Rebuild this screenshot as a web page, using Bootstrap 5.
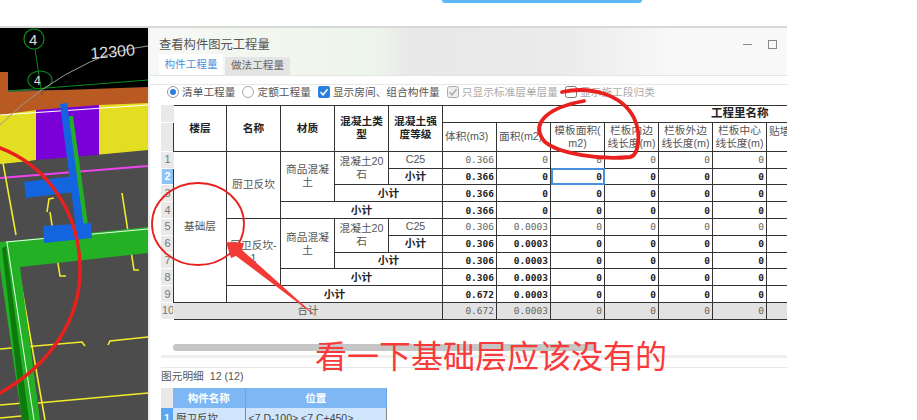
<!DOCTYPE html>
<html lang="zh">
<head>
  <meta charset="UTF-8" />
  <meta name="viewport" content="width=device-width, initial-scale=1.0" />
  <title>查看构件图元工程量</title>
  <link href="https://cdn.jsdelivr.net/npm/bootstrap@5.3.0/dist/css/bootstrap.min.css" rel="stylesheet" />
  <style>
    html, body { height: 420px; overflow: hidden; background: #fff; }
    body { font-family: "Liberation Sans", "Noto Sans CJK SC", sans-serif; color: #555; position: relative; }

    .top-strip { height: 28px; position: relative; border-bottom: 2px solid #d8d8d8; width: 787px; }
    .top-pill { position: absolute; left: 442px; top: 0; width: 200px; height: 3px; background: #5cb8f8; border-radius: 0 0 4px 4px; }
    .main-area { display: flex; width: 787px; height: 392px; }
    .cad-view { width: 148px; height: 392px; flex: none; background: #4c4c4c; }
    .cad-view svg { display: block; }

    .win { flex: 1; min-width: 0; background: #fff; overflow: hidden; border-left: 2px solid #eef0ee; }
    .win-head { height: 48px; background: linear-gradient(90deg, #f6f8f5, #eef5ea 35%, #e8e8e8 41%, #ebebeb 65%, #f8f8f8 82%); border-bottom: 1px solid #e4e4e4; position: relative; }
    .win-title { height: 26px; padding: 8px 0 0 9px; font-size: 12.3px; line-height: 18px; color: #555; }
    .win-btns { position: absolute; right: 10px; top: 12px; display: flex; gap: 16px; align-items: center; }
    .win-min { width: 9px; height: 1px; background: #888; }
    .win-max { width: 9px; height: 9px; border: 1px solid #888; }
    .win-tabs { height: 21px; padding-left: 9px; display: flex; gap: 2px; align-items: flex-end; }
    .win-tab { font-size: 10.6px; line-height: 16px; height: 18px; width: 65px; text-align: center; color: #666; background: #e4e4e4; }
    .win-tab-on { color: #4a90dc; background: #fff; height: 21px; width: 64px; line-height: 21px; }
    .opt-bar { height: 21px; margin: 8px 0 0 0; padding: 0 0 6px 17px; display: flex; align-items: center; gap: 7px; font-size: 10.7px; color: #555; border-top: 1px solid #e8e8e8; }
    .opt-item { display: flex; align-items: center; gap: 3px; white-space: nowrap; }
    .opt-off { color: #aaa; }
    .radio-on { width: 12px; height: 12px; border: 1px solid #999; border-radius: 50%; display: block; position: relative; }
    .radio-on::after { content: ""; position: absolute; left: 2px; top: 2px; width: 6px; height: 6px; border-radius: 50%; background: #2b7fe0; }
    .radio-off { width: 12px; height: 12px; border: 1px solid #aaa; border-radius: 50%; display: block; }
    .tick-box { display: block; flex: none; }

    .grid-wrap { height: 216px; margin-left: 11px; overflow: hidden; }
    .qty-grid { border-collapse: collapse; table-layout: fixed; width: 659px; font-size: 10.7px; color: #555; }
    .qty-grid col { width: 54px; }
    .qty-grid col.col-num { width: 12px; }
    .qty-grid col.col-floor { width: 53px; }
    .qty-grid td, .qty-grid th { border: 1px solid #333; padding: 0 2px; height: 16.8px; line-height: 13px; text-align: center; overflow: hidden; font-weight: normal; }
    .qty-grid th { background: #fff; font-weight: bold; color: #222; }
    .qty-grid th.group-head { height: 15px; text-align: left; padding-left: 268px; font-size: 11.5px; }
    .qty-grid tr.head-low { height: 29px; }
    .qty-grid th.thin { font-weight: normal; color: #555; }
    .qty-grid th.clip { white-space: nowrap; text-align: left; }
    .qty-grid th.clip-top { vertical-align: top; padding-top: 2px; }
    .qty-grid .rownum { width: 12px; background: #e9e9e9; border: 1px solid #e9e9e9; border-bottom-color: #fff; color: #777; padding: 0; font-size: 11px; }
    .qty-grid .rownum-on { background: #8cc4f8; color: #fff; font-weight: bold; }
    .qty-grid .num { text-align: right; font-family: "DejaVu Sans Mono", "Liberation Mono", monospace; font-size: 9.5px; color: #666; }
    .qty-grid .sum { font-weight: bold; color: #222; }
    .qty-grid .pick { outline: 2px solid #4a90dc; outline-offset: -2px; }
    .qty-grid tr.total td { background: #e2e2e2; }
    .qty-grid tr.total td.rownum { background: #e9e9e9; }

    .scroll-row { height: 37px; margin-left: 11px; padding-top: 23px; border-bottom: 3px solid #eee; }
    .scroll-thumb { height: 7px; width: 422px; background: #c6c6c6; border-radius: 3px; margin-left: 12px; }
    .detail-title { font-size: 10.7px; height: 21px; margin: 9px 0 0 11px; line-height: 14px; color: #555; border-top: 1px solid #e8e8e8; padding-top: 1px; }
    .detail-grid { margin-left: 11px; border-collapse: collapse; table-layout: fixed; width: 226px; font-size: 10.5px; }
    .detail-grid col.side-col { width: 12px; }
    .detail-grid col.name-col { width: 72px; }
    .detail-grid td, .detail-grid th { height: 20px; padding: 0 3px; line-height: 14px; white-space: nowrap; overflow: hidden; }
    .detail-grid th { background: #7db8f4; color: #fff; text-align: center; font-weight: bold; border-right: 1px solid #6aa6e4; }
    .detail-grid th.side { background: #e9e9e9; border-right: 0; }
    .detail-grid td { background: #cfe5fb; color: #444; border-right: 1px solid #888; }
    .detail-grid td.side { padding: 0; text-align: center; background: #5aa6f2; color: #fff; font-weight: bold; border-right: 0; }

    .note-layer { position: absolute; left: 0; top: 0; pointer-events: none; }
    .note-text { position: absolute; left: 315px; top: 333px; font-size: 32px; line-height: 42px; color: #f93a3a; white-space: nowrap; font-family: "Noto Sans CJK SC", sans-serif; }
    .cad-num { font-family: "Liberation Sans", sans-serif; fill: #ddd; }
  </style>
</head>

<body>
  <div class="top-strip"><div class="top-pill"></div></div>

  <div class="main-area">
    <div class="cad-view">
      <svg width="148" height="392" viewBox="0 28 148 392">
        <rect x="0" y="28" width="148" height="62" fill="#000" />
        <polygon points="0,96 8,92 148,87 148,106 0,116" fill="#b85a22" />
        <rect x="0" y="72" width="8" height="42" fill="#b85a22" />
        <polygon points="0,115 36,110 36,160 0,165" fill="#e4de22" />
        <polygon points="36,110 99,105 99,155 36,160" fill="#7a00d8" />
        <polygon points="99,105 148,103 148,151 99,155" fill="#e4de22" />
        <line x1="0" y1="115" x2="148" y2="105" stroke="#fff" stroke-width="1.2" />
        <polygon points="0,164 148,150 148,420 0,420" fill="#4c4c4c" />
        <line x1="0" y1="178" x2="148" y2="166" stroke="#ee44ee" stroke-width="2" />
        <!-- axis -->
        <circle cx="34" cy="39" r="10" fill="none" stroke="#0a8a1a" stroke-width="1.2" />
        <ellipse cx="40" cy="80" rx="12" ry="9" fill="none" stroke="#0a8a1a" stroke-width="1.2" />
        <line x1="35" y1="49" x2="42" y2="95" stroke="#0a8a1a" />
        <line x1="8" y1="91" x2="148" y2="80" stroke="#0a8a1a" />
        <path d="M0 125 Q40 85 90 62 Q115 50 148 46" fill="none" stroke="#999" stroke-width="1" />
        <text class="cad-num" x="29" y="45" font-size="15">4</text>
        <text class="cad-num" x="34" y="85" font-size="12">4</text>
        <text class="cad-num" x="91" y="59" font-size="16" transform="rotate(-5 91 59)">12300</text>
        <!-- yellow rebars -->
        <path d="M3 163 L16 235M50 212 L60 276 L66 276M122 193 L134 270 L139 270M18 267 L45 420M0 349 L82 342 L85 346M108 345 L110 341 L148 337M38 403 L148 393M0 405 L24 403M0 418 L32 415" fill="none" stroke="#f0ec28" stroke-width="1.6" />
        <path d="M47 212 L49 199 L54 198" fill="none" stroke="#f0ec28" stroke-width="1.6" />
        <!-- green beams -->
        <polygon points="0,242 148,227 148,253 20,267 40,420 22,420 0,268" fill="#24b024" />
        <polygon points="2,248 6,246 29,420 22,420" fill="#0d7a0d" />
        <path d="M6 242 L148 229M7 242 L34 420" fill="none" stroke="#e6ffe6" stroke-width="1" />
        <polygon points="69,116 73,116 88,225 78,225" fill="#24b024" />
        <polygon points="60,104 67,103 84,228 76,228" fill="#1464e0" />
        <polygon points="24,182 74,176 74,192 26,198" fill="#1464e0" />
        <polygon points="43,226 91,223 92,238 44,243" fill="#1464e0" />
      </svg>
    </div>

    <div class="win">
      <div class="win-head">
        <div class="win-title">查看构件图元工程量</div>
        <div class="win-btns"><span class="win-min"></span><span class="win-max"></span></div>
        <div class="win-tabs">
          <span class="win-tab win-tab-on">构件工程量</span>
          <span class="win-tab">做法工程量</span>
        </div>
      </div>
      <div class="opt-bar">
        <span class="opt-item"><i class="radio-on"></i>清单工程量</span>
        <span class="opt-item"><i class="radio-off"></i>定额工程量</span>
        <span class="opt-item"><svg class="tick-box" width="12" height="12"><rect width="12" height="12" rx="2" fill="#2b7fe0" /><path d="M2.5 6 L5 8.8 L9.5 3.2" fill="none" stroke="#fff" stroke-width="1.4" /></svg>显示房间、组合构件量</span>
        <span class="opt-item opt-off"><svg class="tick-box" width="12" height="12"><rect x=".5" y=".5" width="11" height="11" rx="2" fill="#eee" stroke="#aaa" /><path d="M2.5 6 L5 8.8 L9.5 3.2" fill="none" stroke="#aaa" stroke-width="1.4" /></svg>只显示标准层单层量</span>
        <span class="opt-item opt-off"><svg class="tick-box" width="12" height="12"><rect x=".5" y=".5" width="11" height="11" rx="2" fill="#fff" stroke="#777" /></svg>显示施工段归类</span>
      </div>

      <div class="grid-wrap">
        <table class="qty-grid">
          <colgroup>
            <col class="col-num" /><col class="col-floor" /><col /><col /><col /><col /><col /><col /><col /><col /><col /><col /><col />
          </colgroup>
          <tbody id="gridBody"></tbody>
        </table>
      </div>

      <div class="scroll-row"><div class="scroll-thumb"></div></div>
      <div class="detail-title">图元明细&nbsp; 12 (12)</div>
      <table class="detail-grid">
        <colgroup><col class="side-col" /><col class="name-col" /><col /></colgroup>
        <tr><th class="side"></th><th>构件名称</th><th>位置</th></tr>
        <tr><td class="side">1</td><td>厨卫反坎</td><td>&lt;7,D-100&gt;,&lt;7,C+450&gt;</td></tr>
      </table>
    </div>
  </div>

  <svg class="note-layer" width="917" height="420">
    <g fill="none" stroke="#e8201e" stroke-linecap="round">
      <path d="M0 148 C45 165 80 210 80 270 C80 320 50 365 0 393" stroke-width="3.5" />
      <ellipse cx="198" cy="224" rx="46" ry="41" stroke-width="1.8" />
      <path d="M562 92 C590 86 622 94 634 118 C642 135 638 156 630 157 C600 160 560 154 545 142 C530 125 545 108 584 101" stroke-width="3.8" />
    </g>
    <polygon points="226,242 244,243 242,250 318,318 236,256 231,258" fill="#f23a36" />
  </svg>
  <div class="note-text">看一下基础层应该没有的</div>

  <script>
    // value cells after the label columns: volume, area, then four zero columns and the clipped one
    const cell = (v, bold, pick) => `<td class="num ${bold ? "sum" : ""} ${pick ? "pick" : ""}">${v}</td>`;
    const rest = (vol, area, bold, pick) =>
      cell(vol, bold) + cell(area, bold) + cell(0, bold, pick) + cell(0, bold) + cell(0, bold) + cell(0, bold) + "<td></td>";
    const num = (n, on) => `<td class="rownum ${on ? "rownum-on" : ""}">${n}</td>`;
    const sub = (span) => `<td colspan="${span}" class="sum">小计</td>`;

    document.getElementById("gridBody").innerHTML = `
      <tr><th class="rownum"></th><th rowspan="2">楼层</th><th rowspan="2">名称</th><th rowspan="2">材质</th><th rowspan="2">混凝土类型</th><th rowspan="2">混凝土强度等级</th>
        <th colspan="7" class="group-head">工程里名称</th></tr>
      <tr class="head-low"><th class="rownum"></th><th class="thin clip">体积(m3)</th><th class="thin clip">面积(m2)</th><th class="thin">模板面积(<br>m2)</th><th class="thin">栏板内边<br>线长度(m)</th><th class="thin">栏板外边<br>线长度(m)</th><th class="thin">栏板中心<br>线长度(m)</th><th class="thin clip clip-top">贴墙</th></tr>
      <tr>${num(1)}<td rowspan="9">基础层</td><td rowspan="4">厨卫反坎</td><td rowspan="3">商品混凝<br>土</td><td rowspan="2">混凝土20<br>石</td><td>C25</td>${rest("0.366", 0)}</tr>
      <tr>${num(2, true)}${sub(1)}${rest("0.366", 0, true, true)}</tr>
      <tr>${num(3)}${sub(2)}${rest("0.366", 0, true)}</tr>
      <tr>${num(4)}${sub(3)}${rest("0.366", 0, true)}</tr>
      <tr>${num(5)}<td rowspan="4">厨卫反坎-<br>1</td><td rowspan="3">商品混凝<br>土</td><td rowspan="2">混凝土20<br>石</td><td>C25</td>${rest("0.306", "0.0003")}</tr>
      <tr>${num(6)}${sub(1)}${rest("0.306", "0.0003", true)}</tr>
      <tr>${num(7)}${sub(2)}${rest("0.306", "0.0003", true)}</tr>
      <tr>${num(8)}${sub(3)}${rest("0.306", "0.0003", true)}</tr>
      <tr>${num(9)}${sub(4)}${rest("0.672", "0.0003", true)}</tr>
      <tr class="total">${num(10)}<td colspan="5">合计</td>${rest("0.672", "0.0003")}</tr>`;
  </script>
</body>
</html>
